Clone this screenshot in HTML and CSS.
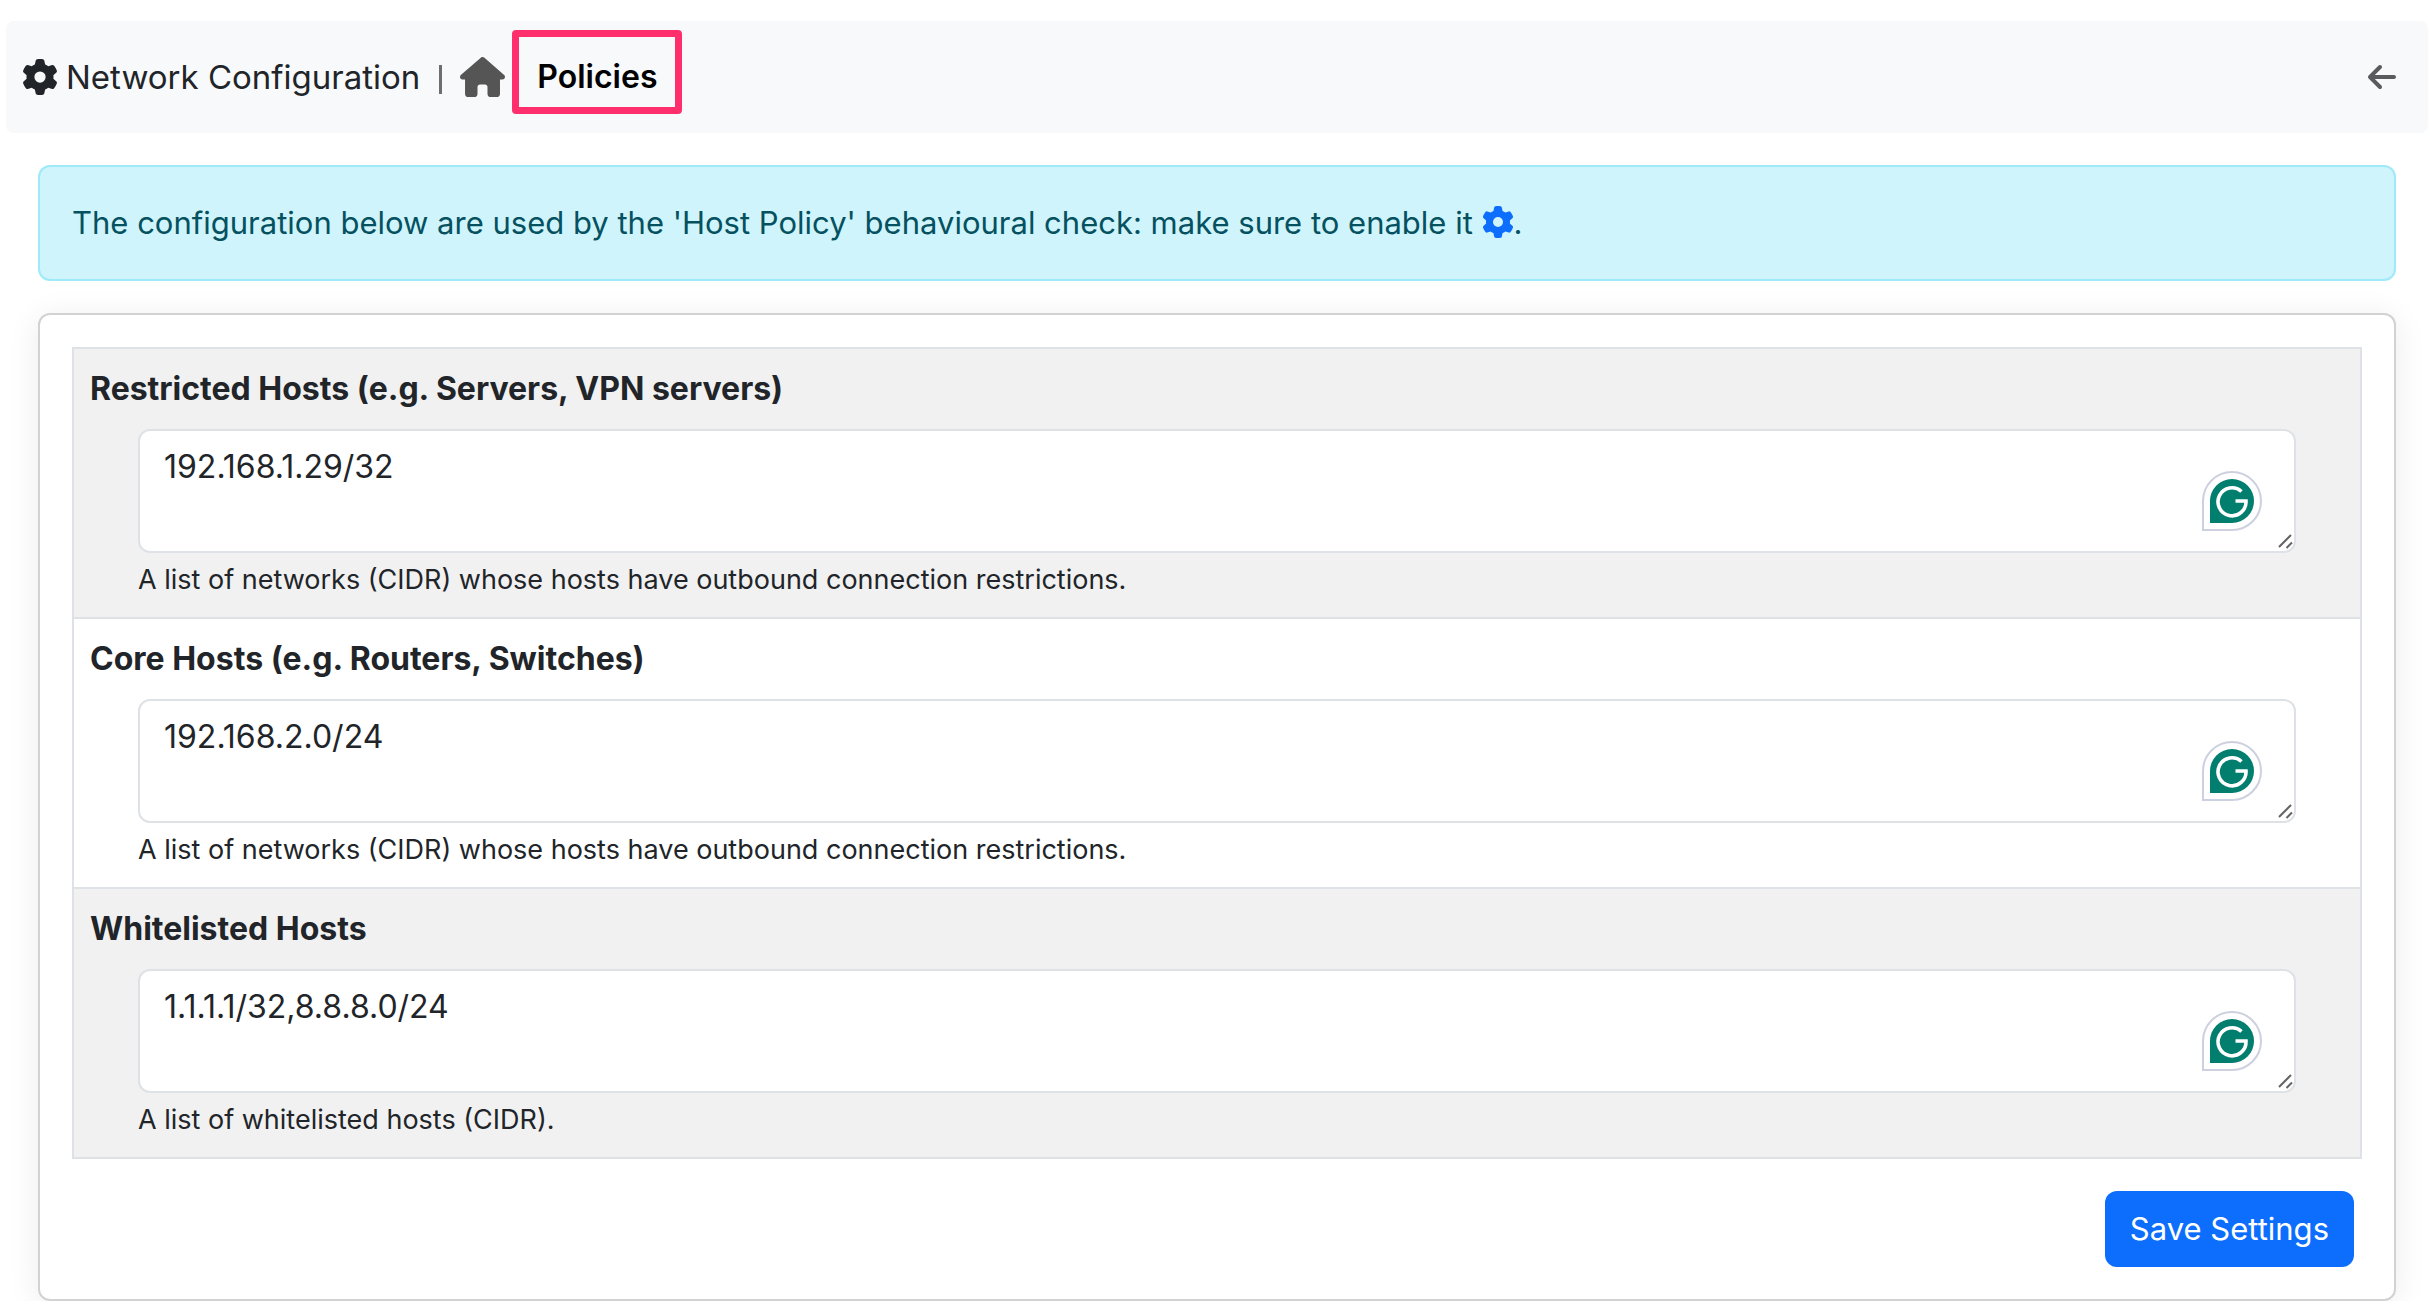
FILE: index.html
```html
<!DOCTYPE html>
<html lang="en">
<head>
<meta charset="utf-8">
<title>Network Configuration | Policies</title>
<meta name="viewport" content="width=device-width, initial-scale=1">
<link rel="stylesheet" href="styles.css">
</head>
<body>
<svg class="sprite" aria-hidden="true">
  <symbol id="gear" viewBox="0 0 512 512"><path d="M495.9 166.6c3.2 8.7 .5 18.4-6.4 24.6l-43.3 39.4c1.1 8.3 1.7 16.8 1.7 25.4s-.6 17.1-1.7 25.4l43.3 39.4c6.9 6.2 9.6 15.9 6.4 24.6c-4.4 11.9-9.7 23.3-15.8 34.3l-4.7 8.1c-6.6 11-14 21.4-22.1 31.2c-5.9 7.2-15.7 9.6-24.5 6.8l-55.7-17.7c-13.4 10.3-28.2 18.9-44 25.4l-12.5 57.1c-2 9.1-9 16.3-18.2 17.8c-13.8 2.3-28 3.5-42.5 3.5s-28.7-1.2-42.5-3.5c-9.2-1.5-16.2-8.7-18.2-17.8l-12.5-57.1c-15.8-6.5-30.6-15.1-44-25.4L83.1 425.9c-8.8 2.8-18.6 .3-24.5-6.8c-8.1-9.8-15.5-20.2-22.1-31.2l-4.7-8.1c-6.1-11-11.4-22.4-15.8-34.3c-3.2-8.7-.5-18.4 6.4-24.6l43.3-39.4C64.6 273.1 64 264.6 64 256s.6-17.1 1.7-25.4L22.4 191.2c-6.9-6.2-9.6-15.9-6.4-24.6c4.4-11.9 9.7-23.3 15.8-34.3l4.7-8.1c6.6-11 14-21.4 22.1-31.2c5.9-7.2 15.7-9.6 24.5-6.8l55.7 17.7c13.4-10.3 28.2-18.9 44-25.4l12.5-57.1c2-9.1 9-16.3 18.2-17.8C227.3 1.2 241.5 0 256 0s28.7 1.2 42.5 3.5c9.2 1.5 16.2 8.7 18.2 17.8l12.5 57.1c15.8 6.5 30.6 15.1 44 25.4l55.7-17.7c8.8-2.8 18.6-.3 24.5 6.8c8.1 9.8 15.5 20.2 22.1 31.2l4.7 8.1c6.1 11 11.4 22.4 15.8 34.3zM256 336a80 80 0 1 0 0-160 80 80 0 1 0 0 160z"/></symbol>
  <symbol id="house" viewBox="0 0 576 512"><path d="M575.8 255.500c0 18-15 32.100-32 32.100h-32V472c0 22.100-17.900 40-40 40H392c-22.100 0-40-17.900-40-40v-88c0-17.700-14.300-32-32-32h-64c-17.700 0-32 14.300-32 32v88c0 22.100-17.900 40-40 40h-79.500c-22.100 0-40-17.900-40-40V287.600H32c-18 0-32-14-32-32.100c0-9 3-17 10-24L266.400 8c7-7 15-8 22-8s15 2 21 7L564.800 231.500c8 7 12 15 11 24z"/></symbol>
  <symbol id="arrow-left" viewBox="0 0 448 512"><path d="M9.400 233.400c-12.500 12.500-12.500 32.800 0 45.300l160 160c12.500 12.500 32.800 12.500 45.300 0s12.500-32.800 0-45.300L109.200 288 416 288c17.700 0 32-14.300 32-32s-14.300-32-32-32l-306.700 0L214.600 118.600c12.500-12.500 12.500-32.800 0-45.300s-32.800-12.500-45.300 0l-160 160z"/></symbol>
  <symbol id="grammar" viewBox="0 0 60 60">
    <path d="M1 59V30A29 29 0 1 1 30 59z" fill="#fff" stroke="#cdd0de" stroke-width="2"/>
    <path d="M8 52V30A22 22 0 1 1 30 52z" fill="#027e6f"/>
    <path d="M39.500 20.500A14 14 0 1 0 44 30H33.500" fill="none" stroke="#fff" stroke-width="3.600"/>
  </symbol>
  <symbol id="grip" viewBox="0 0 16 16"><path d="M2 14 14 2M9.500 15 15 9.500" fill="none" stroke="#646464" stroke-width="2"/></symbol>
</svg>

<nav class="navbar" aria-label="Breadcrumb">
  <h1 class="nav-title"><svg class="icon-title"><use href="#gear"/></svg>Network Configuration</h1>
  <span class="nav-divider"></span>
  <a class="nav-home" href="#" aria-label="Home"><svg class="icon-home"><use href="#house"/></svg></a>
  <a class="nav-tab" href="#" aria-current="page">Policies</a>
  <a class="nav-back" href="#" aria-label="Back"><svg class="icon-back"><use href="#arrow-left"/></svg></a>
</nav>

<main class="content">
  <div class="alert" role="alert">The configuration below are used by the 'Host Policy' behavioural check: make sure to enable it <a class="alert-link" href="#" aria-label="Enable check"><svg class="icon-inline"><use href="#gear"/></svg></a>.</div>

  <form class="card">
    <table class="settings">
      <tbody>
        <tr>
          <td>
            <label class="field-title" for="restricted">Restricted Hosts (e.g. Servers, VPN servers)</label>
            <div class="field">
              <div class="field-box">
                <textarea id="restricted" rows="2" spellcheck="false" aria-describedby="restricted-help">192.168.1.29/32</textarea>
                <svg class="grammar"><use href="#grammar"/></svg>
                <svg class="grip"><use href="#grip"/></svg>
              </div>
              <small class="help" id="restricted-help">A list of networks (CIDR) whose hosts have outbound connection restrictions.</small>
            </div>
          </td>
        </tr>
        <tr>
          <td>
            <label class="field-title" for="core">Core Hosts (e.g. Routers, Switches)</label>
            <div class="field">
              <div class="field-box">
                <textarea id="core" rows="2" spellcheck="false" aria-describedby="core-help">192.168.2.0/24</textarea>
                <svg class="grammar"><use href="#grammar"/></svg>
                <svg class="grip"><use href="#grip"/></svg>
              </div>
              <small class="help" id="core-help">A list of networks (CIDR) whose hosts have outbound connection restrictions.</small>
            </div>
          </td>
        </tr>
        <tr>
          <td>
            <label class="field-title" for="whitelisted">Whitelisted Hosts</label>
            <div class="field">
              <div class="field-box">
                <textarea id="whitelisted" rows="2" spellcheck="false" aria-describedby="whitelisted-help">1.1.1.1/32,8.8.8.0/24</textarea>
                <svg class="grammar"><use href="#grammar"/></svg>
                <svg class="grip"><use href="#grip"/></svg>
              </div>
              <small class="help" id="whitelisted-help">A list of whitelisted hosts (CIDR).</small>
            </div>
          </td>
        </tr>
      </tbody>
    </table>
    <div class="actions"><button class="save" type="submit">Save Settings</button></div>
  </form>
</main>
</body>
</html>
```
FILE: styles.css
```css
* {
  box-sizing: border-box;
}

body {
  margin: 0;
  padding-top: 21px;
  background: #fff;
  color: #212529;
  font-family: Inter, "Liberation Sans", sans-serif;
  font-size: 32px;
  line-height: 48px;
}

.sprite {
  position: absolute;
  width: 0;
  height: 0;
}

svg {
  display: block;
  fill: currentColor;
}

.navbar {
  display: flex;
  align-items: center;
  height: 112px;
  margin: 0 2px 0 6px;
  padding: 0 32px 0 16px;
  border-radius: 8px;
  background: #f8f9fb;
}

.nav-title {
  display: flex;
  align-items: center;
  gap: 8px;
  margin: 0;
  font-size: 33px;
  font-weight: 400;
}

.icon-title {
  width: 36px;
  height: 36px;
}

.nav-divider {
  width: 3px;
  height: 29px;
  margin: 4px 18px 0 19px;
  background: #6c6e72;
}

.nav-home {
  color: #555;
}

.icon-home {
  width: 45px;
  height: 40px;
}

.nav-tab {
  margin: 0 0 10px 7px;
  padding: 18px 18px 8px;
  border: 7px solid #ff2f6e;
  border-radius: 4px;
  color: #000;
  font-weight: 600;
  line-height: 44px;
  text-decoration: none;
}

.nav-back {
  margin-left: auto;
  color: #5a5b5f;
}

.icon-back {
  width: 28px;
  height: 32px;
}

.content {
  display: flex;
  flex-direction: column;
  gap: 32px;
  padding: 32px 34px 0 38px;
}

.alert {
  padding: 32px;
  border: 2px solid #9eeaf9;
  border-radius: 12px;
  background: #cff4fc;
  color: #055160;
  font-size: 31px;
}

.alert-link {
  display: inline-block;
  color: #0d6efd;
  vertical-align: -4px;
}

.icon-inline {
  width: 32px;
  height: 32px;
}

.card {
  padding: 32px;
  border: 2px solid #d2d2d2;
  border-radius: 12px;
  background: #fff;
  box-shadow: 0 4px 32px rgba(0, 0, 0, 0.08);
}

.settings {
  width: 100%;
  border-collapse: collapse;
}

.settings td {
  padding: 16px;
  border: 2px solid #dee2e6;
}

.settings tr:nth-child(odd) {
  background: #f1f1f1;
}

.field-title {
  display: block;
  margin-bottom: 16px;
  font-weight: 700;
}

.field {
  padding: 0 48px;
}

.field-box {
  position: relative;
}

textarea {
  display: block;
  width: 100%;
  height: 124px;
  padding: 12px 24px;
  border: 2px solid #dee2e6;
  border-radius: 12px;
  background: #fff;
  color: inherit;
  font: inherit;
  resize: vertical;
}

textarea::-webkit-resizer {
  background: transparent;
}

.grammar {
  position: absolute;
  right: 34px;
  bottom: 22px;
  width: 60px;
  height: 60px;
  pointer-events: none;
}

.grip {
  position: absolute;
  right: 3px;
  bottom: 4px;
  width: 16px;
  height: 16px;
  pointer-events: none;
}

.help {
  display: block;
  margin-top: 6px;
  font-size: 27px;
  line-height: 42px;
}

.actions {
  display: flex;
  justify-content: flex-end;
  margin-top: 32px;
  padding-right: 8px;
}

.save {
  padding: 14px 25px;
  border: 0;
  border-radius: 12px;
  background: #0d6efd;
  color: #fff;
  font: inherit;
  font-size: 31px;
}
```
